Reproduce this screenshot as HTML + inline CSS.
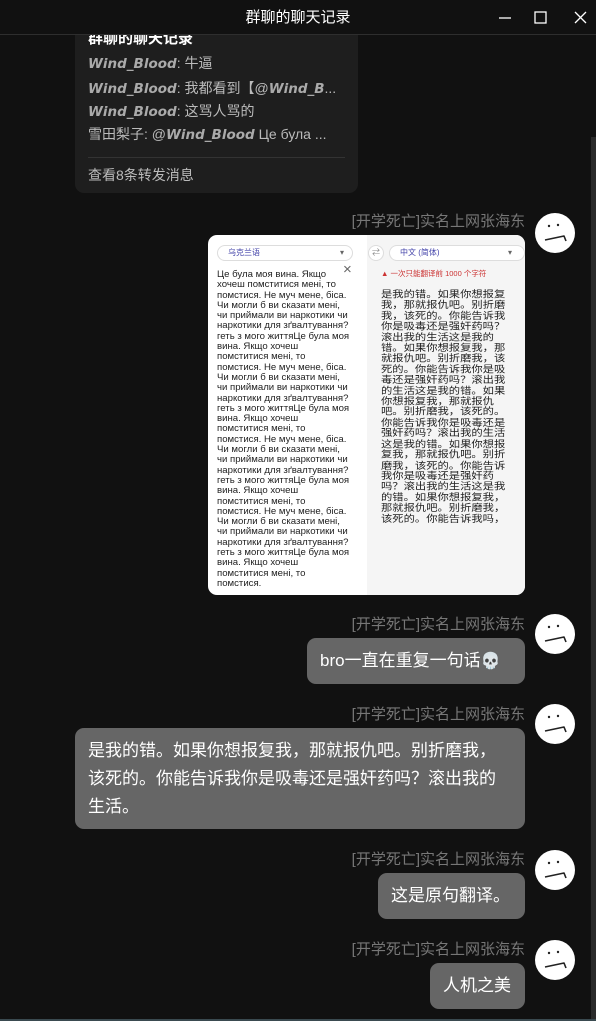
<!DOCTYPE html>
<html><head><meta charset="utf-8"><style>
*{margin:0;padding:0;box-sizing:border-box}
body{width:596px;height:1021px;background:#111;overflow:hidden;position:relative;font-family:"Liberation Sans","Noto Sans CJK SC",sans-serif;color:#fff}
.title{position:absolute;left:0;top:0;width:596px;height:35px;border-bottom:1px solid #2e2e2e;background:#111;text-align:center;line-height:35px;font-size:15px;z-index:5}
.ctl{position:absolute;top:0;height:35px;width:40px}
.card{position:absolute;left:75px;top:10px;width:283px;height:183px;background:#1e1e1e;border-radius:9px;padding:0 13px;color:#bbb;font-size:14px}
.card .l{position:absolute;left:13px;white-space:nowrap}
.card i{font-style:italic;font-weight:bold;color:#aaa;font-family:"DejaVu Sans",sans-serif;font-size:13.5px}
.name{position:absolute;right:71px;font-size:15px;color:#777;white-space:nowrap}
.av{position:absolute;left:535px;width:40px;height:40px}
.bub{position:absolute;background:#666;border-radius:9px;font-size:17px;line-height:28px;color:#fff;padding:9px 13px;white-space:nowrap}
.shot{position:absolute;left:208px;top:235px;width:317px;height:360px;border-radius:9px;overflow:hidden;background:#fff;color:#222}
</style></head><body>
<div class="title">群聊的聊天记录
<svg class="ctl" style="left:485px" viewBox="0 0 40 35"><line x1="14" y1="18" x2="26" y2="18" stroke="#fff" stroke-width="1.3"/></svg>
<svg class="ctl" style="left:520px" viewBox="0 0 40 35"><rect x="15" y="12" width="11" height="11" fill="none" stroke="#fff" stroke-width="1.3"/></svg>
<svg class="ctl" style="left:560px" viewBox="0 0 40 35"><path d="M15 12 L26 23 M26 12 L15 23" stroke="#fff" stroke-width="1.3"/></svg>
</div>
<div class="card">
<div class="l" style="top:17px;color:#fff;font-weight:bold;font-size:15px">群聊的聊天记录</div>
<div class="l" style="top:43px"><i>Wind_Blood</i>: 牛逼</div>
<div class="l" style="top:68px"><i>Wind_Blood</i>: 我都看到【@<i>Wind_B</i>...</div>
<div class="l" style="top:91px"><i>Wind_Blood</i>: 这骂人骂的</div>
<div class="l" style="top:114px">雪田梨子: @<i>Wind_Blood</i> Це була ...</div>
<div style="position:absolute;left:13px;right:13px;top:147px;border-top:1px solid #333"></div>
<div class="l" style="top:155px">查看8条转发消息</div>
</div>
<div style="position:absolute;left:591px;top:137px;width:5px;height:884px;background:#2a2a2a"></div>

<svg width="0" height="0" style="position:absolute"><defs><g id="f"><circle cx="20" cy="20" r="20" fill="#fff"/><circle cx="14" cy="13" r="1.2" fill="#222"/><circle cx="23" cy="12" r="1.2" fill="#222"/><path d="M10 27 L29 23 L31 28" fill="none" stroke="#222" stroke-width="1.6" stroke-linejoin="round"/></g></defs></svg>

<div class="name" style="top:210px">[开学死亡]实名上网张海东</div>
<svg class="av" style="top:213px" viewBox="0 0 40 40"><use href="#f"/></svg>
<div class="shot">
<div style="position:absolute;left:159px;top:0;width:158px;height:360px;background:#f5f5f5"></div>
<div style="position:absolute;left:9px;top:10px;width:136px;height:16px;border:1px solid #ddd;border-radius:8px;background:#fff;font-size:8px;color:#44a;padding-left:10px;line-height:14px">乌克兰语<span style="position:absolute;right:8px;color:#666">▾</span></div>
<div style="position:absolute;left:160px;top:10px;width:16px;height:16px;border-radius:8px;background:#fff;border:1px solid #ddd;font-size:8px;color:#888;text-align:center;line-height:14px">⇄</div>
<div style="position:absolute;left:181px;top:10px;width:136px;height:16px;border:1px solid #ddd;border-radius:8px;background:#fff;font-size:8px;color:#44a;padding-left:10px;line-height:14px">中文 (简体)<span style="position:absolute;right:12px;color:#666">▾</span></div>
<div style="position:absolute;left:135px;top:26px;font-size:15px;color:#666">×</div>
<div style="position:absolute;left:173px;top:33px;font-size:7.5px;color:#c33">▲ 一次只能翻译前 1000 个字符</div>
<div style="position:absolute;left:9px;top:35px;width:134px;font-size:9.6px;line-height:10.3px">Це була моя вина. Якщо хочеш помститися мені, то помстися. Не муч мене, біса. Чи могли б ви сказати мені, чи приймали ви наркотики чи наркотики для зґвалтування? геть з мого життяЦе була моя вина. Якщо хочеш помститися мені, то помстися. Не муч мене, біса. Чи могли б ви сказати мені, чи приймали ви наркотики чи наркотики для зґвалтування? геть з мого життяЦе була моя вина. Якщо хочеш помститися мені, то помстися. Не муч мене, біса. Чи могли б ви сказати мені, чи приймали ви наркотики чи наркотики для зґвалтування? геть з мого життяЦе була моя вина. Якщо хочеш помститися мені, то помстися. Не муч мене, біса. Чи могли б ви сказати мені, чи приймали ви наркотики чи наркотики для зґвалтування? геть з мого життяЦе була моя вина. Якщо хочеш помститися мені, то помстися.</div>
<div style="position:absolute;left:173px;top:55px;width:126px;font-size:11.3px;line-height:12.4px;transform:scaleY(0.86);transform-origin:0 0">是我的错。如果你想报复我，那就报仇吧。别折磨我，该死的。你能告诉我你是吸毒还是强奸药吗？滚出我的生活这是我的错。如果你想报复我，那就报仇吧。别折磨我，该死的。你能告诉我你是吸毒还是强奸药吗？滚出我的生活这是我的错。如果你想报复我，那就报仇吧。别折磨我，该死的。你能告诉我你是吸毒还是强奸药吗？滚出我的生活这是我的错。如果你想报复我，那就报仇吧。别折磨我，该死的。你能告诉我你是吸毒还是强奸药吗？滚出我的生活这是我的错。如果你想报复我，那就报仇吧。别折磨我，该死的。你能告诉我吗，</div>
</div>

<div class="name" style="top:613px">[开学死亡]实名上网张海东</div>
<svg class="av" style="top:614px" viewBox="0 0 40 40"><use href="#f"/></svg>
<div class="bub" style="left:307px;top:638px;width:218px;height:46px">bro一直在重复一句话<span style="font-size:16px">💀</span></div>

<div class="name" style="top:703px">[开学死亡]实名上网张海东</div>
<svg class="av" style="top:704px" viewBox="0 0 40 40"><use href="#f"/></svg>
<div class="bub" style="left:75px;top:728px;width:450px;height:101px;padding-top:9px">是我的错。如果你想报复我，那就报仇吧。别折磨我，<br>该死的。你能告诉我你是吸毒还是强奸药吗？滚出我的<br>生活。</div>

<div class="name" style="top:848px">[开学死亡]实名上网张海东</div>
<svg class="av" style="top:850px" viewBox="0 0 40 40"><use href="#f"/></svg>
<div class="bub" style="left:378px;top:873px;width:147px;height:46px">这是原句翻译。</div>

<div class="name" style="top:938px">[开学死亡]实名上网张海东</div>
<svg class="av" style="top:940px" viewBox="0 0 40 40"><use href="#f"/></svg>
<div class="bub" style="left:430px;top:963px;width:95px;height:46px">人机之美</div>
<div style="position:absolute;left:0;top:1019px;width:596px;height:2px;background:#3a4a50"></div>
</body></html>
